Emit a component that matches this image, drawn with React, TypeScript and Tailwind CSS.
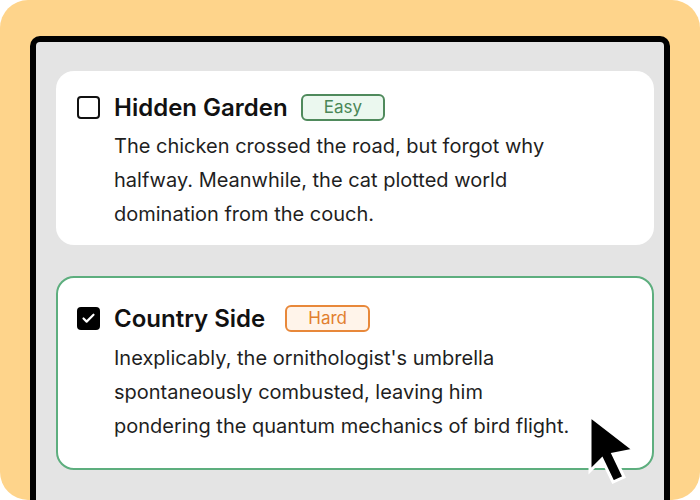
import { Check } from 'lucide-react';

interface Task {
  title: string;
  level: 'Easy' | 'Hard';
  text: string;
  done: boolean;
}

const tasks: Task[] = [
  {
    title: 'Hidden Garden',
    level: 'Easy',
    text: 'The chicken crossed the road, but forgot why halfway. Meanwhile, the cat plotted world domination from the couch.',
    done: false,
  },
  {
    title: 'Country Side',
    level: 'Hard',
    text: "Inexplicably, the ornithologist's umbrella spontaneously combusted, leaving him pondering the quantum mechanics of bird flight.",
    done: true,
  },
];

function Badge({ level }: { level: Task['level'] }) {
  const cls =
    level === 'Easy'
      ? 'ml-[13px] bg-[#ebf8ef] border-[#4f8a5c] text-[#4a8757]'
      : 'ml-[20px] bg-[#fff4ea] border-[#e8883a] text-[#e27f2f]';
  return (
    <span className={`h-[27px] px-[21px] flex items-center rounded-[6px] border-2 text-[17px] ${cls}`}>
      {level}
    </span>
  );
}

function TaskCard({ task }: { task: Task }) {
  const shell = task.done
    ? 'border-2 border-[#5dae7e] pl-[19px] pt-[27px] pb-[25px]'
    : 'pl-[21px] pt-[23px] pb-[14px]';
  return (
    <div className={`bg-white rounded-[18px] pr-6 ${shell}`}>
      <div className="flex items-center">
        {task.done ? (
          <span className="w-[23px] h-[23px] rounded-[4px] bg-black flex items-center justify-center">
            <Check size={15} strokeWidth={3.5} className="text-white" />
          </span>
        ) : (
          <span className="w-[23px] h-[23px] rounded-[4px] border-2 border-[#111]" />
        )}
        <h3 className="ml-[14px] text-[24px] font-semibold text-[#111] leading-[27px]">{task.title}</h3>
        <Badge level={task.level} />
      </div>
      <p className={`ml-[37px] text-[20px] leading-[34px] text-[#1f1f1f] max-w-[458px] ${task.done ? 'mt-[9px]' : 'mt-[8px]'}`}>
        {task.text}
      </p>
    </div>
  );
}

function Cursor() {
  return (
    <svg className="absolute left-[587px] top-[413px]" width="52" height="72" viewBox="0 0 52 72">
      <path
        d="M3 3 L3 58 L15 46 L26 69 L37 64 L26 41 L47 37 Z"
        fill="black"
        stroke="white"
        strokeWidth="3"
        strokeLinejoin="miter"
      />
    </svg>
  );
}

export default function App() {
  return (
    <div className="relative w-[700px] h-[500px] bg-white overflow-hidden" style={{ fontFamily: 'Inter, "Noto Sans", sans-serif' }}>
      <div className="w-full h-full bg-[#fed48b] rounded-[28px] pt-[36px] px-[30px] overflow-hidden">
        <div className="h-[500px] bg-[#e4e4e4] border-[6px] border-b-0 border-black rounded-t-[10px] pt-[29px] pl-[20px] pr-[10px]">
          <div className="flex flex-col gap-[31px]">
            {tasks.map(t => (
              <TaskCard key={t.title} task={t} />
            ))}
          </div>
        </div>
      </div>
      <Cursor />
    </div>
  );
}
